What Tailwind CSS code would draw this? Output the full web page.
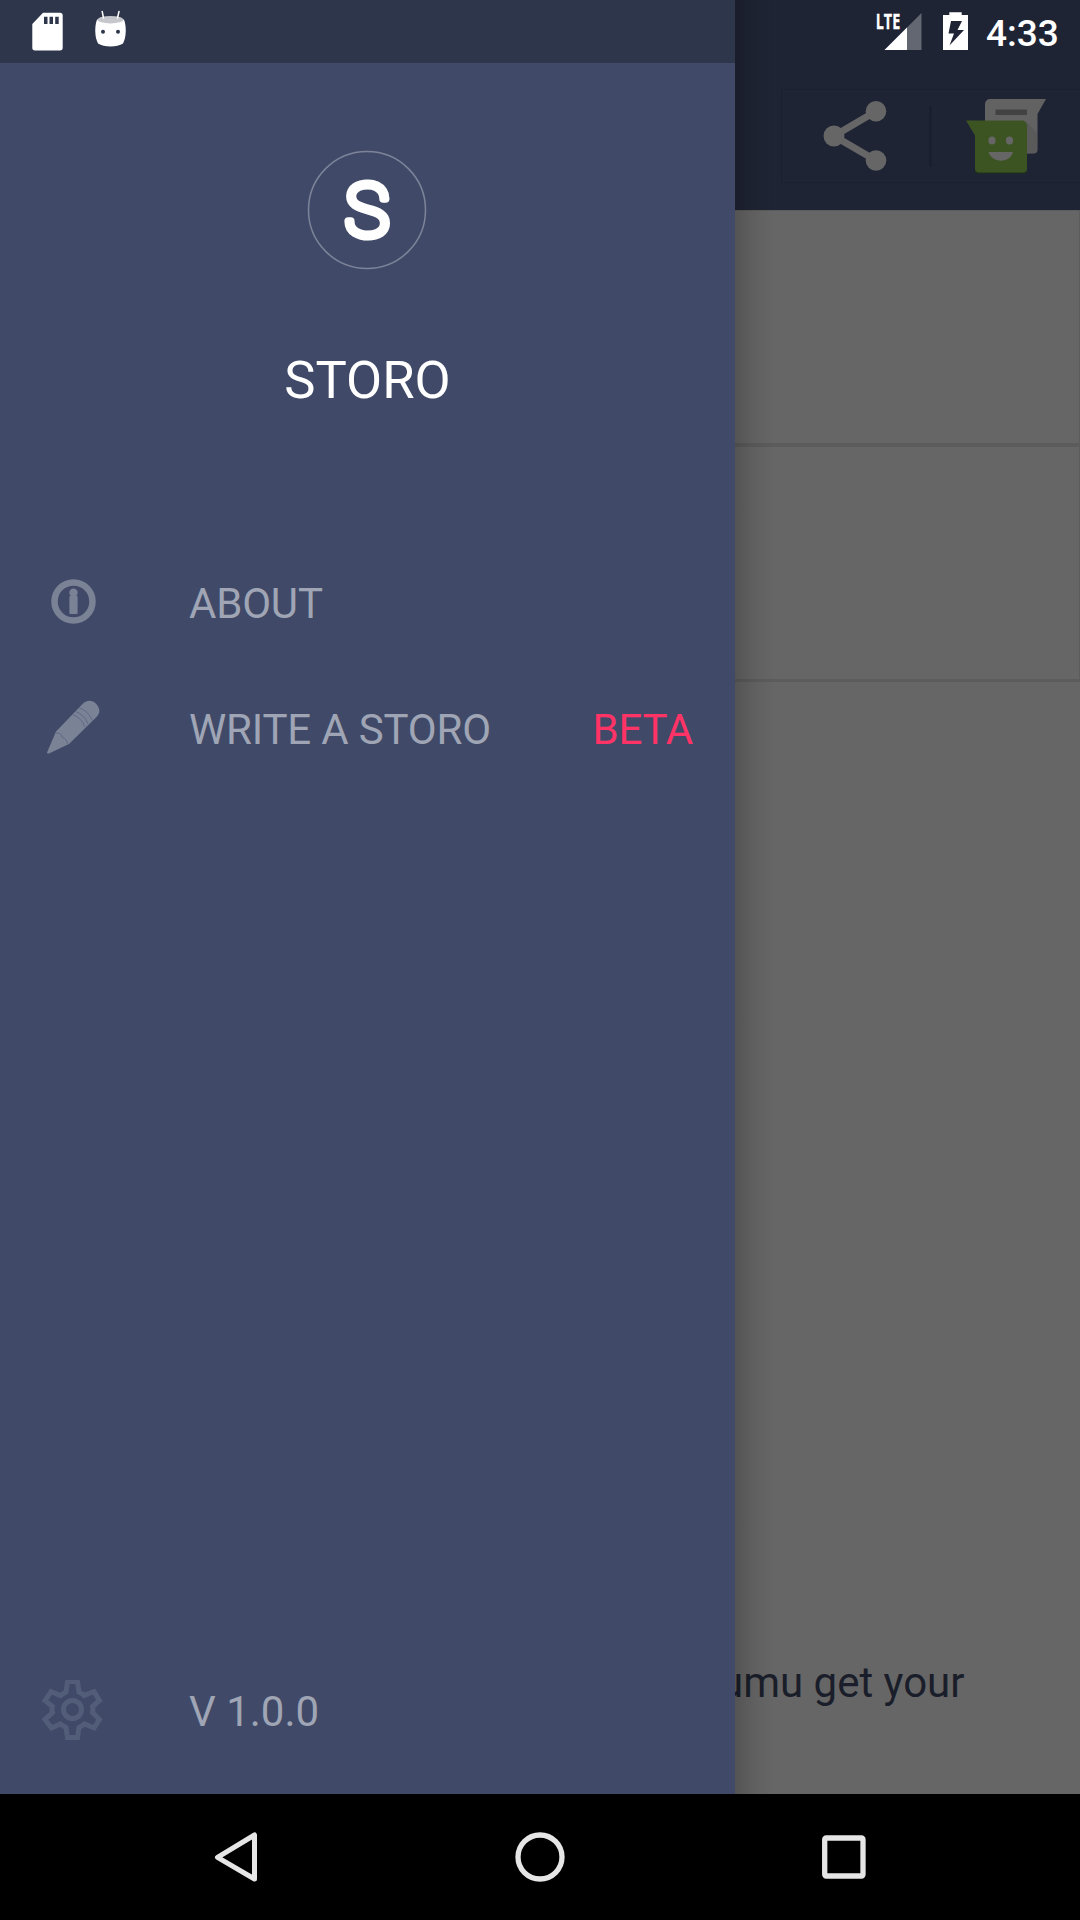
<!DOCTYPE html>
<html lang="en">
<head>
<meta charset="utf-8">
<title>Storo</title>
<script src="https://cdn.jsdelivr.net/npm/@tailwindcss/browser@4"></script>
</head>
<body class="flex h-[1920px] w-[1080px] flex-col overflow-hidden bg-black font-['Roboto',sans-serif]">
<div class="flex h-[1794px]">
  <!-- navigation drawer -->
  <aside class="flex w-[735px] flex-col bg-[#404a68] text-[42px] leading-none text-[#9fa5b4]">
    <div class="flex h-[63px] items-start bg-[#2e364b]">
      <svg class="ml-8 mt-3 h-10 w-8" viewBox="32 12 32 40"><path fill="#fff" fill-rule="evenodd" d="M43 12.7H60a2.7 2.7 0 0 1 2.7 2.7V47.700a2.700 2.700 0 0 1-2.700 2.700H35a2.700 2.700 0 0 1-2.700-2.700V24ZM44 16.700V24h3.500V16.700ZM49.500 16.700V24H53V16.700ZM55.200 16.700V24H58.700V16.700Z"/></svg>
      <svg class="ml-7 mt-2 h-10 w-9" viewBox="92 8 36 40"><path fill="#fff" d="M97 19.500C94.500 26 94.500 37 98 43.500C104 47.500 117 47.500 123 43.500C126.500 37 126.500 26 124 19.500Z"/><ellipse cx="110.500" cy="19.700" rx="12.800" ry="3.700" fill="#c5c7cc"/><path stroke="#fff" stroke-width="1.500" stroke-linecap="round" d="m102.200 11.500 1.300 6.500M119 11.500l-1.500 6.500"/><circle cx="103" cy="31.700" r="2" fill="#2e364b"/><circle cx="118" cy="31.700" r="2" fill="#2e364b"/></svg>
    </div>
    <div class="flex flex-col items-center pt-[86px]">
      <svg class="h-[122px] w-[122px]" viewBox="306.500 149 122 122"><circle cx="366.500" cy="210" r="58.500" fill="none" stroke="#7d8499" stroke-width="1.500"/><text x="366.500" y="236" text-anchor="middle" font-family="Roboto" font-weight="100" font-size="73" fill="#fff" stroke="#fff" stroke-width="8" stroke-linejoin="round" textLength="44" lengthAdjust="spacingAndGlyphs">S</text></svg>
      <h1 class="mt-[83px] text-[52.5px] leading-[52px] text-white">STORO</h1>
    </div>
    <nav class="mt-[135px] flex flex-col">
      <div class="flex h-[126px] items-center">
        <svg class="ml-[41px] h-16 w-16" viewBox="41 572 64 64"><circle cx="73.500" cy="601.500" r="19" fill="none" stroke="#7a8296" stroke-width="6.500"/><circle cx="73.500" cy="592.800" r="4.200" fill="#7a8296"/><rect x="69.400" y="596" width="8.200" height="18" rx="1" fill="#7a8296"/></svg>
        <span class="ml-[84px] tracking-[-0.2px]">ABOUT</span>
      </div>
      <div class="flex h-[126px] items-center">
        <svg class="ml-[41px] h-16 w-16" viewBox="41 698 64 64"><path fill="#7a8296" d="M47 752.500 56 731.500 82 704.500C88 698 96 700.500 99 708.500C100 711.500 99 714 97 716.500L69 744 49.500 753.200Q47 754 47 752.500Z"/><path fill="none" stroke="#5f6a86" stroke-width="1" d="M55.500 733q6-.5 6.500 4 5.500 2.500 5.500 7.500M72.500 714.500Q82 718 85 727M75.500 711.500Q85 715 88 724M79 707.500Q89 711.500 92 720.500"/></svg>
        <span class="ml-[84px] tracking-[-0.18px]">WRITE A STORO</span>
        <span class="ml-auto mr-[42px] tracking-[-0.2px] text-[#ff3366]">BETA</span>
      </div>
    </nav>
    <div class="mb-[19px] mt-auto flex h-[126px] items-center">
      <svg class="ml-[41px] h-16 w-16" viewBox="41 1680 64 64" fill="none" stroke="#525d79" stroke-width="5"><path d="M67.500 1681.500H77.500L79 1692Q82 1693.500 84 1695.500L94 1691.500 99.500 1700.500 92.500 1706.500Q93.500 1709.500 92.500 1712.500L99.500 1719.500 94 1728 84.500 1724Q82 1726 79 1727.500L77.500 1737.500H67.500L66 1727.500Q63 1726 60.500 1724L51.500 1728 45 1719.500 52.500 1712.500Q51.500 1709.500 52.500 1706.500L45 1700.500 51 1691.500 60.500 1695.500Q63 1693.500 66 1692Z" class="overflow-visible"/><circle cx="72.500" cy="1709.500" r="9"/></svg>
      <span class="ml-[84px]">V 1.0.0</span>
    </div>
  </aside>
  <!-- dimmed page behind the drawer -->
  <main class="relative flex w-[345px] flex-col overflow-hidden bg-[#666666]">
    <header class="flex h-[210px] flex-col bg-[#1f2434]">
      <div class="flex h-[63px] items-start">
        <svg class="ml-[139px] mt-2.5 h-11 w-[52px] overflow-visible" viewBox="874 10 52 44"><path fill="#636771" d="M921.500 13V50H884.500Z"/><path fill="#fff" d="M907 27.500V50H884.500Z"/><path fill="#1f2434" d="M874 10h27v19.500h-27Z"/><text x="875.700" y="29" font-family="Open Sans,Roboto" font-weight="700" font-size="22" fill="#fff" stroke="#fff" stroke-width=".3" textLength="24.500" lengthAdjust="spacingAndGlyphs">LTE</text></svg>
        <svg class="ml-3 mt-2.5 h-11 w-8" viewBox="938 10 32 44"><path fill="#fff" fill-rule="evenodd" d="M949.300 12.200H961.700V15H968V50H943V15H949.300ZM951 21 948.500 33.500H954L949.500 45.500 964 30H957.500L962 21Z"/></svg>
        <span class="ml-4 mt-3.5 text-[37px] font-medium leading-10 text-white">4:33</span>
      </div>
      <div class="ml-[46px] mt-[26px] flex h-[94px] items-center border border-r-0 border-[#1a2030]">
        <svg class="ml-[38px] h-20 w-[72px]" viewBox="820 96 72 80" fill="#666"><path fill="none" stroke="#666" stroke-width="7" d="M876 111.300 834 136l42 24.500"/><circle cx="876" cy="111.300" r="10.300"/><circle cx="834" cy="136" r="10.500"/><circle cx="876" cy="160.500" r="10.300"/></svg>
        <div class="ml-[37px] h-[61px] w-[2.500px] bg-[#1a1f2d]"></div>
        <svg class="ml-[29px] h-20 w-[90px]" viewBox="961 96 90 80"><path fill="#626262" d="M990 99h56l-8.500 15v35.500a4 4 0 0 1-4 4H989a4 4 0 0 1-4-4V104a5 5 0 0 1 5-5Z"/><path fill="#424242" d="M995.500 109.500H1027v5.500H995.500Z"/><path fill="#4c4c4c" d="m1025 121 12.500 12v16.500a4 4 0 0 1-4 4H1025Z" opacity=".35"/><path fill="#1f3018" d="M975 151h52v19.500a3 3 0 0 1-3 3H978a3 3 0 0 1-3-3Z"/><path fill="#3c5422" d="M966 120.500h56a5 5 0 0 1 5 5V168.500a4 4 0 0 1-4 4H979a4 4 0 0 1-4-4V135.500Z"/><ellipse cx="992" cy="140.500" rx="3.600" ry="4" fill="#666"/><ellipse cx="1009.500" cy="140.500" rx="3.600" ry="4" fill="#666"/><path fill="#666" d="M988.500 152h24.500c-3 11.500-21 11.500-24.500 0Z"/></svg>
      </div>
    </header>
    <section class="h-[237px] border-b-4 border-r border-t border-[#5c5c5c]"></section>
    <section class="h-[235px] border-b-[3px] border-r border-[#5c5c5c]"></section>
    <p class="-ml-[15px] mb-[85px] mt-auto whitespace-nowrap text-[42px] leading-[52px] text-[#1a1e2a]">umu get your</p>
    <!-- shadow cast by the drawer -->
    <div class="absolute inset-y-0 left-0 w-10 bg-linear-to-r from-black/18 via-black/6 to-black/0"></div>
  </main>
</div>
<!-- system navigation -->
<footer class="flex h-[126px] items-center">
  <svg class="ml-[204px] h-16 w-16" viewBox="204 1825 64 64"><path fill="none" stroke="#e6e6e6" stroke-width="5" stroke-linejoin="round" d="M254.500 1835v44L217.500 1857.300Z"/></svg>
  <svg class="ml-[240px] h-16 w-16" viewBox="508 1825 64 64"><circle cx="540" cy="1857" r="22" fill="none" stroke="#e6e6e6" stroke-width="5.300"/></svg>
  <svg class="ml-[240px] h-16 w-16" viewBox="812 1825 64 64"><rect x="824.700" y="1838" width="38.300" height="38" rx="1.500" fill="none" stroke="#e6e6e6" stroke-width="5.300"/></svg>
</footer>
</body>
</html>
